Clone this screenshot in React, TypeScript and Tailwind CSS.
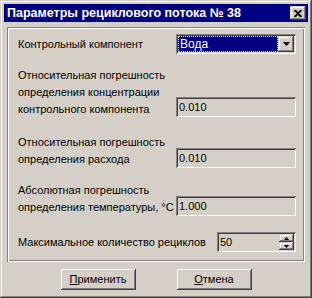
const frame =
  'shadow-[inset_-1px_-1px_0_#404040,inset_1px_1px_0_#d4d0c8,inset_-2px_-2px_0_#808080,inset_2px_2px_0_#ffffff]';
const sunken =
  'shadow-[inset_1px_1px_0_#808080,inset_-1px_-1px_0_#ffffff,inset_2px_2px_0_#404040,inset_-2px_-2px_0_#d4d0c8]';
const raised =
  'shadow-[inset_-1px_-1px_0_#404040,inset_1px_1px_0_#ffffff,inset_-2px_-2px_0_#808080]';
const raisedSoft =
  'shadow-[inset_-1px_-1px_0_#404040,inset_1px_1px_0_#d4d0c8,inset_-2px_-2px_0_#808080,inset_2px_2px_0_#ffffff]';
const etched =
  'shadow-[inset_1px_1px_0_#808080,inset_-1px_-1px_0_#ffffff,inset_2px_2px_0_#ffffff,inset_-2px_-2px_0_#808080]';

function Field({ value }: { value: string }) {
  return (
    <div className={`w-[120px] h-[20px] bg-[#d4d0c8] ${sunken} pl-[3px] flex items-center text-black`}>
      {value}
    </div>
  );
}

function Arrow({ up = false, size = 7 }: { up?: boolean; size?: number }) {
  const h = Math.ceil(size / 2);
  const pts = up ? `0,${h} ${size / 2},0 ${size},${h}` : `0,0 ${size},0 ${size / 2},${h}`;
  return (
    <svg width={size} height={h} viewBox={`0 0 ${size} ${h}`}>
      <polygon points={pts} fill="#000" />
    </svg>
  );
}

export default function App() {
  return (
    <div
      className={`w-[312px] h-[298px] bg-[#d4d0c8] ${frame} p-[4px] flex flex-col text-[11px] text-black`}
      style={{ fontFamily: '"Liberation Sans", Arial, sans-serif' }}
    >
      {/* Title bar */}
      <div className="h-[18px] bg-[#000080] flex items-center justify-between pl-[3px] pr-[2px]">
        <span className="text-white font-bold text-[12.5px] leading-none">Параметры рециклового потока № 38</span>
        <div className={`w-[16px] h-[14px] bg-[#d4d0c8] ${raisedSoft} flex items-center justify-center`}>
          <svg width="8" height="7" viewBox="0 0 8 7">
            <path d="M0 0h2l2 2 2-2h2v1L5 3.5 8 6v1H6L4 5 2 7H0V6l3-2.5L0 1z" fill="#000" />
          </svg>
        </div>
      </div>

      {/* Group box */}
      <div className={`mt-[5px] mx-[3px] h-[235px] ${etched} pl-[11px] pr-[9px] pt-[7px] flex flex-col`}>
        <div className="flex items-center justify-between h-[20px]">
          <span>Контрольный компонент</span>
          <div className={`w-[120px] h-[20px] bg-white ${sunken} p-[2px] flex`}>
            <div className="flex-1 bg-[#000080] border border-dotted border-[#ffff00] text-white text-[12px] pl-[1px] flex items-center">
              Вода
            </div>
            <div className={`w-[16px] bg-[#d4d0c8] ${raisedSoft} flex items-center justify-center`}>
              <Arrow size={7} />
            </div>
          </div>
        </div>

        <div className="mt-[13px] flex items-end justify-between">
          <div className="leading-[17px]">
            <div>Относительная погрешность</div>
            <div>определения концентрации</div>
            <div>контрольного компонента</div>
          </div>
          <div className="mb-[1px]">
            <Field value="0.010" />
          </div>
        </div>

        <div className="mt-[16px] flex items-end justify-between">
          <div className="leading-[17px]">
            <div>Относительная погрешность</div>
            <div>определения расхода</div>
          </div>
          <Field value="0.010" />
        </div>

        <div className="mt-[14px] flex items-end justify-between">
          <div className="leading-[17px]">
            <div>Абсолютная погрешность</div>
            <div>определения температуры, °C</div>
          </div>
          <Field value="1.000" />
        </div>

        <div className="mt-[16px] flex items-center justify-between">
          <span>Максимальное количество рециклов</span>
          <div className={`w-[79px] h-[20px] bg-[#d4d0c8] ${sunken} pl-[3px] pr-[2px] py-[2px] flex items-stretch`}>
            <span className="flex-1 flex items-center">50</span>
            <div className="w-[15px] flex flex-col">
              <div className={`flex-1 bg-[#d4d0c8] ${raisedSoft} flex items-center justify-center`}>
                <Arrow up size={5} />
              </div>
              <div className={`flex-1 bg-[#d4d0c8] ${raisedSoft} flex items-center justify-center`}>
                <Arrow size={5} />
              </div>
            </div>
          </div>
        </div>
      </div>

      {/* Buttons */}
      <div className="mt-[7px] flex justify-center gap-[41px]">
        <button className={`w-[75px] h-[21px] bg-[#d4d0c8] ${raised}`}>
          <span className="underline">П</span>рименить
        </button>
        <button className={`w-[75px] h-[21px] bg-[#d4d0c8] ${raised}`}>
          <span className="underline">О</span>тмена
        </button>
      </div>
    </div>
  );
}
